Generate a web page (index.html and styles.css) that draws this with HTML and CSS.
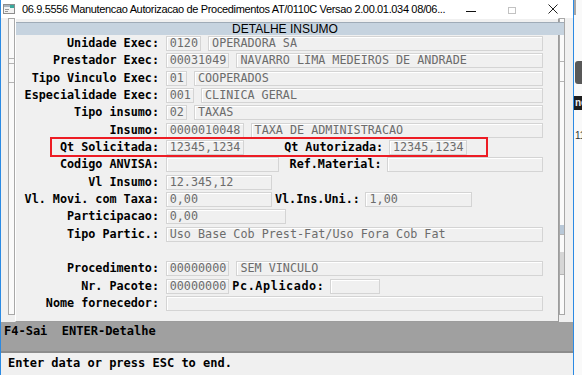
FILE: index.html
```html
<!DOCTYPE html>
<html lang="pt">
<head>
    <meta charset="UTF-8">
    <title>Manutencao Autorizacao de Procedimentos</title>
    <link rel="stylesheet" href="styles.css">
</head>
<body>
<div class="screen">
    <div class="window">
        <div class="titlebar">
            <svg class="app-icon" width="12" height="10" viewBox="0 0 12 10">
                <rect x="0.5" y="0.5" width="11" height="9" fill="#f2f2f2" stroke="#8c8c8c"/>
                <rect x="1" y="1" width="10" height="2" fill="#a9b4bf"/>
                <rect x="7" y="1" width="4" height="3" fill="#3aa89c"/>
                <path d="M2 5.5H6M2 7.5H5" stroke="#9a9a9a"/>
            </svg>
            <span class="title">06.9.5556 Manutencao Autorizacao de Procedimentos AT/0110C Versao 2.00.01.034 08/06...</span>
            <span class="controls">
                <svg class="btn-min" width="10" height="10" viewBox="0 0 10 10"><path d="M0 7.5H10" stroke="#111"/></svg>
                <svg class="btn-max" width="8" height="10" viewBox="0 0 8 10"><rect x="0.5" y="3.5" width="7" height="6" fill="none" stroke="#c2c2c2"/></svg>
                <svg class="btn-close" width="10" height="10" viewBox="0 0 10 10"><path d="M0.5 0.5L9.5 9.5M9.5 0.5L0.5 9.5" stroke="#222"/></svg>
            </span>
        </div>

        <div class="frame">
            <div class="strip strip-l">
                <i class="seg l1"></i><i class="seg l2"></i><i class="seg l3"></i>
            </div>

            <div class="dialog">
                <div class="caption">DETALHE INSUMO</div>
                <div class="fields">
                    <div class="row"><span class="lbl">Unidade Exec:</span><span class="box c4">0120</span><span class="box fill">OPERADORA SA</span></div>
                    <div class="row"><span class="lbl">Prestador Exec:</span><span class="box c8">00031049</span><span class="box fill">NAVARRO LIMA MEDEIROS DE ANDRADE</span></div>
                    <div class="row"><span class="lbl">Tipo Vinculo Exec:</span><span class="box c2">01</span><span class="box fill">COOPERADOS</span></div>
                    <div class="row"><span class="lbl">Especialidade Exec:</span><span class="box c3">001</span><span class="box fill">CLINICA GERAL</span></div>
                    <div class="row"><span class="lbl">Tipo insumo:</span><span class="box c2">02</span><span class="box fill">TAXAS</span></div>
                    <div class="row"><span class="lbl">Insumo:</span><span class="box c10">0000010048</span><span class="box fill">TAXA DE ADMINISTRACAO</span></div>
                    <div class="row">
                        <span class="lbl">Qt Solicitada:</span><span class="box c10">12345,1234</span>
                        <span class="lbl2 qt-aut">Qt Autorizada:</span><span class="box c10 after-lbl">12345,1234</span>
                        <span class="mark"></span>
                    </div>
                    <div class="row"><span class="lbl">Codigo ANVISA:</span><span class="box c15"></span><span class="lbl2 ref-mat">Ref.Material:</span><span class="box fill after-lbl"></span></div>
                    <div class="row"><span class="lbl">Vl Insumo:</span><span class="box c14">12.345,12</span></div>
                    <div class="row"><span class="lbl">Vl. Movi. com Taxa:</span><span class="box c14">0,00</span><span class="lbl2 ins-uni">Vl.Ins.Uni.:</span><span class="box c14 after-lbl">1,00</span></div>
                    <div class="row"><span class="lbl">Participacao:</span><span class="box c16">0,00</span></div>
                    <div class="row"><span class="lbl">Tipo Partic.:</span><span class="box fill">Uso Base Cob Prest-Fat/Uso Fora Cob Fat</span></div>
                    <div class="row"></div>
                    <div class="row"><span class="lbl">Procedimento:</span><span class="box c8">00000000</span><span class="box fill">SEM VINCULO</span></div>
                    <div class="row"><span class="lbl">Nr. Pacote:</span><span class="box c8">00000000</span><span class="lbl2 pc-apl">Pc.Aplicado:</span><span class="box c6"></span></div>
                    <div class="row"><span class="lbl">Nome fornecedor:</span><span class="box fill"></span></div>
                </div>
            </div>

            <div class="strip strip-r">
                <i class="seg r1"></i><i class="seg r2"></i><i class="seg r3"></i><i class="seg r4"></i><i class="seg r5"></i><i class="seg r6"></i>
            </div>
        </div>

        <div class="keybar">F4-Sai  ENTER-Detalhe</div>
        <div class="status">Enter data or press ESC to end.</div>
    </div>

    <div class="behind">
        <div class="b-top"></div>
        <div class="b-pill"></div>
        <div class="b-band">ne</div>
        <div class="b-num">11</div>
    </div>
</div>
</body>
</html>
```
FILE: styles.css
```css
* {
    box-sizing: border-box;
}
body {
    margin: 0;
    background: #fff;
    font-family: "Liberation Sans", Arial, sans-serif;
}
.screen {
    display: flex;
    width: 582px;
    height: 375px;
    overflow: hidden;
}
.window {
    width: 574px;
    height: 375px;
    flex-shrink: 0;
    background: #f0f0f0;
    border-left: 1px solid #2b8ae3;
    border-right: 1px solid #2b8ae3;
}

/* title bar */
.titlebar {
    height: 18px;
    background: #fff;
    display: flex;
    align-items: center;
}
.app-icon {
    margin-left: 2px;
    flex-shrink: 0;
}
.title {
    margin-left: 7px;
    font-size: 11px;
    letter-spacing: -0.35px;
    color: #000;
    white-space: nowrap;
}
.controls {
    margin-left: auto;
    margin-right: 15px;
    display: flex;
    align-items: center;
}
.btn-max {
    margin: 0 32px;
}

/* parent frame with the detail dialog on top */
.frame {
    display: flex;
    align-items: flex-start;
    margin-left: 7px;
    width: 557px;
    height: 297px;
    margin-bottom: 7px;
}
.strip {
    height: 297px;
    display: flex;
    flex-direction: column;
    border: 1px solid #a8a8a8;
    background: #fafafa;
}
.strip .seg {
    display: block;
    flex-shrink: 0;
    border-bottom: 1px solid #b4b4b4;
}
.strip-l {
    width: 7px;
}
.l1 { height: 40px; }
.l2 { height: 5px; }
.l3 { height: 19px; }
.strip-r {
    width: 6px;
}
.r1 { height: 43px; }
.r2 { height: 20px; }
.r3 { height: 143px; border-bottom: none !important; }
.r4 { height: 10px; background: #b8c8d8; }
.r5 { height: 17px; border-bottom: none !important; }
.r6 { height: 23px; background: #d6d6d6; }

.dialog {
    position: relative;
    z-index: 1;
    width: 544px;
    height: 304px;
    flex-shrink: 0;
    padding-top: 2.7px;
    background: #f0f0f0;
    border: 1px solid #9c9c9c;
    border-top-color: #fff;
    border-left-color: #fff;
}
.caption {
    height: 13px;
    margin-right: -6px;
    padding-right: 10px;
    background: #c6d3df;
    border-top: 1px solid #9fabb7;
    font-size: 12px;
    line-height: 12px;
    text-align: center;
    color: #000;
}

/* form fields */
.fields {
    font-family: "DejaVu Sans Mono", "Liberation Mono", monospace;
    font-size: 11.75px;
    line-height: 13px;
}
.row {
    position: relative;
    display: flex;
    align-items: center;
    height: 17.35px;
    padding-right: 14.7px;
}
.lbl {
    width: 143px;
    flex-shrink: 0;
    text-align: right;
    font-weight: bold;
    color: #000;
    white-space: pre;
}
.lbl2 {
    flex-shrink: 0;
    text-align: right;
    font-weight: bold;
    color: #000;
    white-space: pre;
}
.box {
    height: 15px;
    flex-shrink: 0;
    margin-left: 1ch;
    padding-left: 3px;
    border: 1px solid #d4d4d4;
    box-shadow: inset 1px 1px 0 #fff;
    color: #6c6c6c;
    white-space: pre;
    overflow: hidden;
}
.lbl + .box {
    margin-left: 6.7px;
}
.box.fill {
    flex: 1;
}
.box.after-lbl {
    margin-left: 5.7px;
}
.c2 { width: 3ch; }
.c3 { width: 4ch; }
.c4 { width: 5ch; }
.c6 { width: 7ch; }
.c8 { width: 9ch; }
.c10 { width: 11ch; }
.c14 { width: 15ch; }
.c15 { width: 16ch; }
.c16 { width: 17ch; }

.qt-aut { width: 139.7px; }
.ref-mat { width: 102.7px; }
.ins-uni { width: 88px; }
.pc-apl {
    width: 98px;
    margin-left: 3px;
    text-align: left;
    letter-spacing: 0.6px;
}
.pc-apl + .box {
    margin-left: 0;
}

/* red annotation around the quantity fields */
.mark {
    position: absolute;
    left: 34px;
    top: -2.1px;
    width: 437.5px;
    height: 20.3px;
    border: 2px solid #ed1c24;
    pointer-events: none;
}

/* bottom bars */
.keybar {
    height: 31px;
    padding: 1px 0 0 3px;
    background: #a0a0a0;
    border-bottom: 2px solid #8c8c8c;
    font: bold 12px/16px "DejaVu Sans Mono", monospace;
    color: #000;
    white-space: pre;
}
.status {
    padding: 2px 0 0 7px;
    font: bold 12px/16px "DejaVu Sans Mono", monospace;
    color: #000;
    white-space: pre;
}

/* the application window behind */
.behind {
    flex: 1;
    background: #f9f9f9;
    overflow: hidden;
}
.b-top {
    width: 2px;
    height: 15px;
    background: #a8a8a8;
}
.b-pill {
    margin: 46px 0 0 1px;
    height: 23px;
    background: #585858;
    border-radius: 3px 0 0 3px;
}
.b-band {
    margin-top: 12px;
    height: 14px;
    padding-left: 1px;
    background: #1d1d1d;
    color: #eee;
    font-size: 10px;
    line-height: 14px;
    font-weight: bold;
}
.b-num {
    margin-top: 21px;
    padding-left: 1px;
    color: #333;
    font-size: 10px;
    line-height: 10px;
}
```
